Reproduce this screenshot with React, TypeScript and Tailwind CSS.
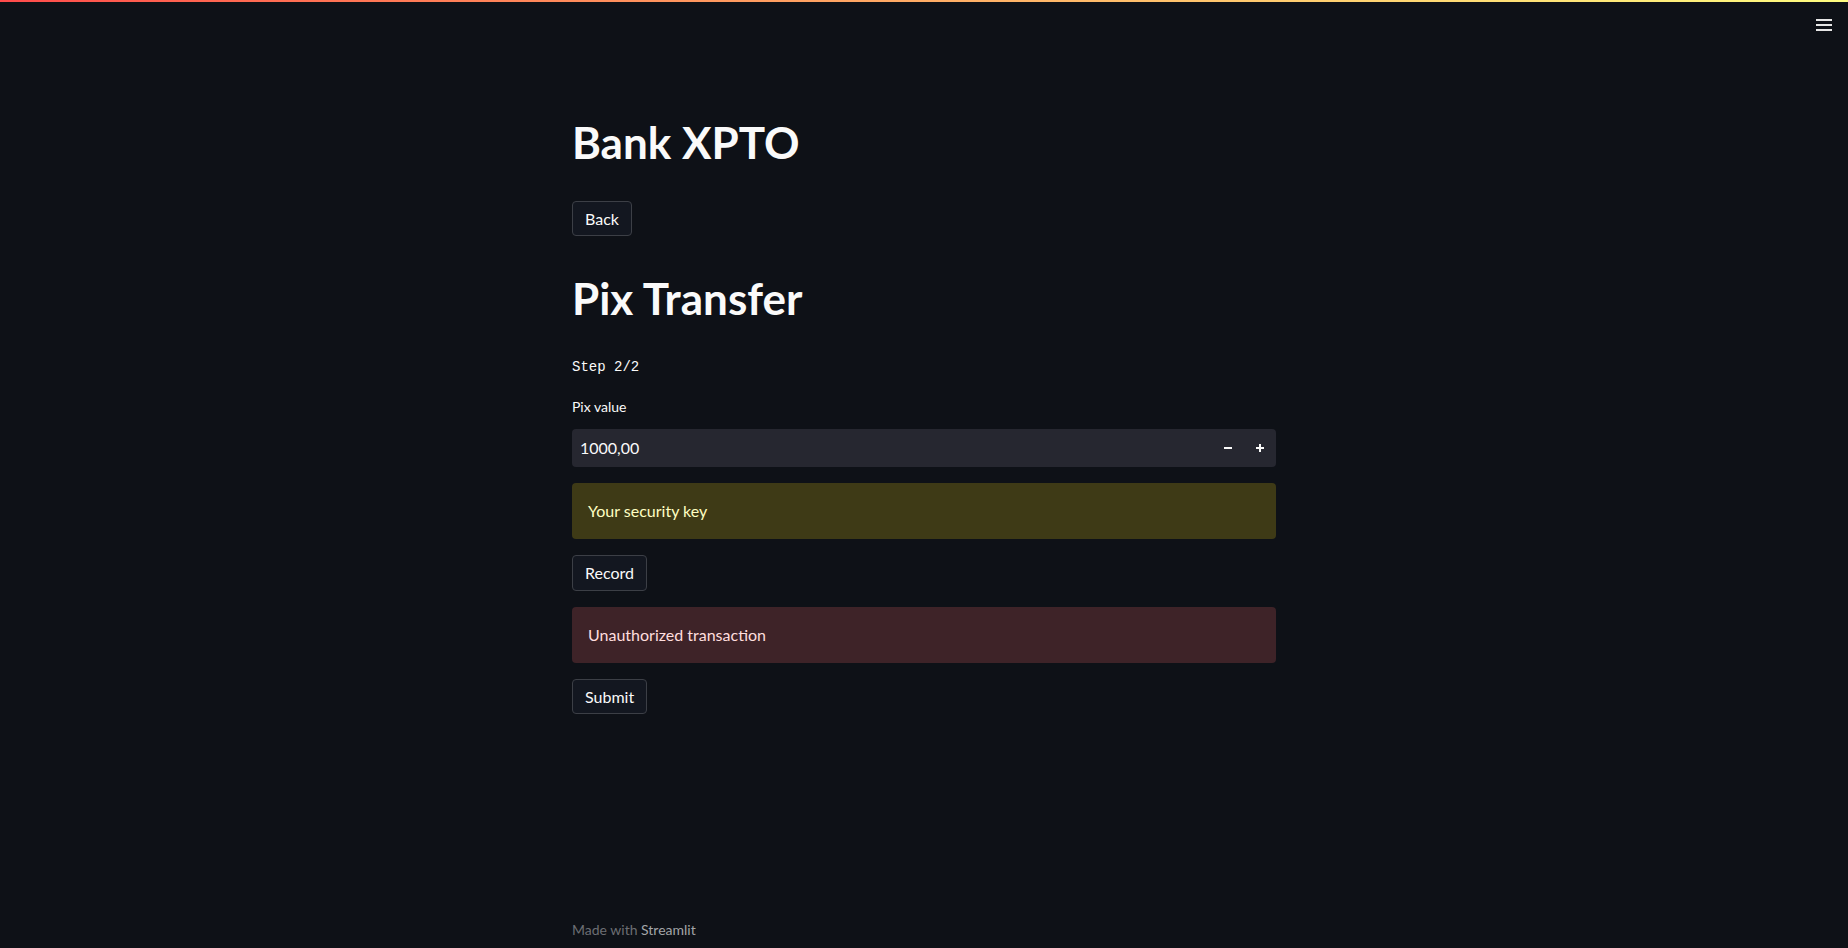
export default function App() {
  return (
    <div className="relative flex min-h-screen flex-col bg-[#0e1117] text-[#fafafa] font-['Lato','Noto_Sans',sans-serif]">
      <div className="h-[2px] w-full bg-gradient-to-r from-[#ff4b4b] to-[#fffd80]" />

      <button className="absolute right-[16px] top-[18px] flex h-[14px] w-[16px] flex-col justify-between py-[1px]">
        <span className="block h-[2px] w-full bg-[#e6e6e6]" />
        <span className="block h-[2px] w-full bg-[#e6e6e6]" />
        <span className="block h-[2px] w-full bg-[#e6e6e6]" />
      </button>

      <main className="flex-1">
        <div className="mx-auto flex w-[704px] flex-col gap-4 pt-[94px]">
          <h1 className="pt-5 pb-4 text-[44px] font-bold leading-[1.2]">Bank XPTO</h1>

          <div>
            <button className="rounded border border-[#3c3f46] bg-[#131720] px-3 py-1 text-base leading-[1.6]">
              Back
            </button>
          </div>

          <h1 className="pt-5 pb-4 text-[44px] font-bold leading-[1.2]">Pix Transfer</h1>

          <div className="font-['Liberation_Mono',monospace] text-sm leading-[21px]">Step 2/2</div>

          <div>
            <label className="mb-[12px] block pt-[2px] text-sm leading-[21px]">Pix value</label>
            <div className="flex h-[38px] items-center rounded bg-[#262730]">
              <span className="flex-1 px-2 text-base">1000,00</span>
              <span className="flex h-full w-[32px] items-center justify-center">
                <svg width="10" height="10" viewBox="0 0 10 10">
                  <path d="M1 5h8" stroke="#fafafa" strokeWidth="2" />
                </svg>
              </span>
              <span className="flex h-full w-[32px] items-center justify-center">
                <svg width="10" height="10" viewBox="0 0 10 10">
                  <path d="M1 5h8M5 1v8" stroke="#fafafa" strokeWidth="2" />
                </svg>
              </span>
            </div>
          </div>

          <div className="rounded bg-[#3e3a16] px-4 py-4 text-base leading-6 text-[#ffffc2]">
            Your security key
          </div>

          <div>
            <button className="rounded border border-[#3c3f46] bg-[#131720] px-3 py-1 text-base leading-[1.6]">
              Record
            </button>
          </div>

          <div className="rounded bg-[#3e2328] px-4 py-4 text-base leading-6 text-[#ffdede]">
            Unauthorized transaction
          </div>

          <div>
            <button className="rounded border border-[#3c3f46] bg-[#131720] px-3 py-1 text-base leading-[1.6]">
              Submit
            </button>
          </div>
        </div>
      </main>

      <footer className="mx-auto w-[704px] py-2 text-sm leading-[21px] text-[#6c6e73]">
        Made with <span className="text-[#a3a5a8]">Streamlit</span>
      </footer>
    </div>
  );
}
